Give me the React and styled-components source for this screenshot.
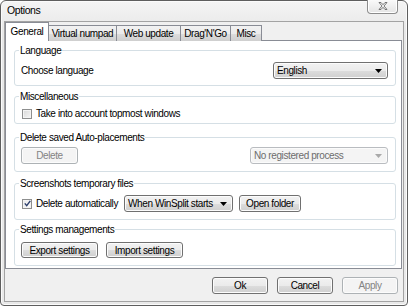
import React from "react";
import styled, { createGlobalStyle, css } from "styled-components";

const GlobalStyle = createGlobalStyle`
  html, body {
    margin: 0;
    padding: 0;
    background: #ffffff;
  }
  body {
    font-family: "Liberation Sans", Arial, sans-serif;
    font-size: 10px;
    letter-spacing: -0.4px;
    color: #000;
  }
`;

const tabs = [
  { id: "general", label: "General", width: 44 },
  { id: "numpad", label: "Virtual numpad", width: 69 },
  { id: "web", label: "Web update", width: 65 },
  { id: "drag", label: "Drag'N'Go", width: 51 },
  { id: "misc", label: "Misc", width: 32 },
];

function ArrowIcon({ disabled }) {
  return (
    <svg width="7" height="4" viewBox="0 0 7 4">
      <path d="M0 0h7L3.5 4z" fill={disabled ? "#a9a9a9" : "#000"} />
    </svg>
  );
}

function CloseGlyph() {
  return (
    <svg width="10" height="9" viewBox="0 0 10 9">
      <path
        d="M1 0.5h2l2 2.2 2-2.2h2l-3 3.5 3 3.5h-2l-2-2.2-2 2.2h-2l3-3.5z"
        fill="#f4f4f4"
        stroke="#6a6a6a"
        strokeWidth="0.9"
        strokeLinejoin="round"
      />
    </svg>
  );
}

function CheckMark() {
  return (
    <svg width="7" height="7" viewBox="0 0 7 7">
      <path d="M0.8 3.4l1.9 2.2L6.3 0.9" fill="none" stroke="#2b3d6b" strokeWidth="1.4" />
    </svg>
  );
}

function Options() {
  return (
    <Window>
      <TitleBar>
        <Title>Options</Title>
        <CloseButton>
          <CloseGlyph />
        </CloseButton>
      </TitleBar>
      <Client>
        <TabStrip>
          {tabs.map((tab, i) => (
            <Tab key={tab.id} $active={i === 0} $w={tab.width}>
              {tab.label}
            </Tab>
          ))}
        </TabStrip>
        <Panel>
          <Group $h={36}>
            <GroupTitle>Language</GroupTitle>
            <Row $top={11} $between>
              <span>Choose language</span>
              <Combo $w={115}>
                <span>English</span>
                <ArrowIcon />
              </Combo>
            </Row>
          </Group>

          <Group $h={28} $gap={10}>
            <GroupTitle>Miscellaneous</GroupTitle>
            <Row $top={11}>
              <Check />
              <span>Take into account topmost windows</span>
            </Row>
          </Group>

          <Group $h={35} $gap={13}>
            <GroupTitle>Delete saved Auto-placements</GroupTitle>
            <Row $top={9} $between>
              <Button $w={57} disabled>
                Delete
              </Button>
              <Combo $w={138} $disabled>
                <span>No registered process</span>
                <ArrowIcon disabled />
              </Combo>
            </Row>
          </Group>

          <Group $h={37} $gap={11}>
            <GroupTitle>Screenshots temporary files</GroupTitle>
            <Row $top={11}>
              <Check $checked>
                <CheckMark />
              </Check>
              <span>Delete automatically</span>
              <Combo $w={109} $ml={2}>
                <span>When WinSplit starts</span>
                <ArrowIcon />
              </Combo>
              <Button $w={62} $ml={2}>
                Open folder
              </Button>
            </Row>
          </Group>

          <Group $h={37} $gap={9}>
            <GroupTitle>Settings managements</GroupTitle>
            <Row $top={12}>
              <Button $w={77} $h={16}>
                Export settings
              </Button>
              <Button $w={77} $h={16} $ml={4}>
                Import settings
              </Button>
            </Row>
          </Group>
        </Panel>
        <ButtonBar>
          <Button $w={56}>Ok</Button>
          <Button $w={56}>Cancel</Button>
          <Button $w={56} disabled>
            Apply
          </Button>
        </ButtonBar>
      </Client>
    </Window>
  );
}

export default function App() {
  return (
    <>
      <GlobalStyle />
      <Options />
    </>
  );
}

const Window = styled.div`
  width: 408px;
  height: 306px;
  box-sizing: border-box;
  border: 1px solid #5e5e5e;
  border-radius: 6px 6px 4px 4px;
  background: linear-gradient(#f4f4f4, #e8e8e8 30px, #e9e9e9);
  display: flex;
  flex-direction: column;
  padding: 0 3px 3px 3px;
  box-shadow: inset 0 0 0 1px #fbfbfb;
`;

const TitleBar = styled.div`
  height: 20px;
  display: flex;
  align-items: flex-start;
  justify-content: space-between;
  flex-shrink: 0;
`;

const Title = styled.div`
  padding: 3px 0 0 3px;
  font-size: 10.5px;
  color: #000;
`;

const CloseButton = styled.div`
  width: 31px;
  height: 14px;
  margin-right: 6px;
  margin-top: -1px;
  box-sizing: border-box;
  border: 1px solid #8c8c8c;
  border-top: none;
  border-radius: 0 0 4px 4px;
  background: linear-gradient(#fafafa, #e4e4e4);
  display: flex;
  align-items: center;
  justify-content: center;
  box-shadow: inset 0 -1px 0 #fff, inset 1px 0 0 #fff, inset -1px 0 0 #fff;
`;

const Client = styled.div`
  flex: 1;
  display: flex;
  flex-direction: column;
  border: 1px solid #a3a3a3;
  background: #f0f0f0;
  padding-right: 1px;
`;

const TabStrip = styled.div`
  display: flex;
  align-items: flex-end;
  height: 18px;
  padding-top: 1px;
  position: relative;
  z-index: 1;
  margin-bottom: -1px;
`;

const Tab = styled.div`
  width: ${(p) => p.$w}px;
  box-sizing: border-box;
  height: 16px;
  border: 1px solid #898c95;
  border-bottom: none;
  margin-left: -1px;
  display: flex;
  align-items: center;
  justify-content: center;
  background: linear-gradient(#f2f2f2, #ebebeb 50%, #dddddd 51%, #cfcfcf);
  white-space: nowrap;
  &:first-child {
    margin-left: 0;
  }
  ${(p) =>
    p.$active &&
    css`
      height: 19px;
      background: #fff;
      margin-right: -2px;
      position: relative;
      z-index: 2;
      padding-bottom: 2px;
      & + div {
        margin-left: 1px;
      }
    `}
`;

const Panel = styled.div`
  flex: 1;
  background: #fff;
  border: 1px solid #898c95;
  padding: 9px 5px 0 8px;
  display: flex;
  flex-direction: column;
`;

const Group = styled.div`
  position: relative;
  height: ${(p) => p.$h}px;
  margin-top: ${(p) => p.$gap || 0}px;
  box-sizing: border-box;
  border: 1px solid #d5dfe5;
  border-radius: 3px;
  padding: 0 7px 0 6px;
  flex-shrink: 0;
`;

const GroupTitle = styled.div`
  position: absolute;
  top: -7px;
  left: 4px;
  padding: 0 1px;
  background: #fff;
  line-height: 13px;
`;

const Row = styled.div`
  display: flex;
  align-items: center;
  margin-top: ${(p) => p.$top}px;
  justify-content: ${(p) => (p.$between ? "space-between" : "flex-start")};
  gap: 4px;
`;

const Combo = styled.div`
  width: ${(p) => p.$w}px;
  height: 17px;
  box-sizing: border-box;
  margin-left: ${(p) => p.$ml || 0}px;
  border: 1px solid ${(p) => (p.$disabled ? "#b9bcc0" : "#707070")};
  border-radius: 3px;
  padding: 0 5px 0 3px;
  display: flex;
  align-items: center;
  justify-content: space-between;
  color: ${(p) => (p.$disabled ? "#6d6d6d" : "#000")};
  background: ${(p) =>
    p.$disabled
      ? "#f4f4f4"
      : "linear-gradient(#f2f2f2, #ebebeb 50%, #dddddd 51%, #cfcfcf)"};
  box-shadow: inset 0 0 0 1px ${(p) => (p.$disabled ? "#fbfbfb" : "#fcfcfc")};
  white-space: nowrap;
`;

const Button = styled.button`
  width: ${(p) => p.$w}px;
  height: ${(p) => p.$h || 17}px;
  margin: 0 0 0 ${(p) => p.$ml || 0}px;
  padding: 0;
  box-sizing: border-box;
  font-family: "Liberation Sans", Arial, sans-serif;
  font-size: 10px;
  letter-spacing: -0.4px;
  color: #000;
  border: 1px solid #707070;
  border-radius: 3px;
  background: linear-gradient(#f2f2f2, #ebebeb 50%, #dddddd 51%, #cfcfcf);
  box-shadow: inset 0 0 0 1px #fcfcfc;
  white-space: nowrap;
  &:disabled {
    color: #838383;
    border-color: #adb2b5;
    background: #f4f4f4;
  }
`;

const Check = styled.div`
  width: 10px;
  height: 10px;
  box-sizing: border-box;
  border: 1px solid #8e8f8f;
  background: linear-gradient(135deg, #d8d8d8, #f6f6f6);
  box-shadow: inset 0 0 0 1px #f4f4f4;
  display: flex;
  align-items: center;
  justify-content: center;
  margin-left: 1px;
  ${(p) =>
    p.$checked &&
    css`
      background: linear-gradient(135deg, #e6e6e6, #fdfdfd);
    `}
`;

const ButtonBar = styled.div`
  height: 32px;
  display: flex;
  justify-content: flex-end;
  align-items: flex-start;
  padding: 8px 4px 0 0;
  box-sizing: border-box;
  gap: 9px;
  flex-shrink: 0;
`;
